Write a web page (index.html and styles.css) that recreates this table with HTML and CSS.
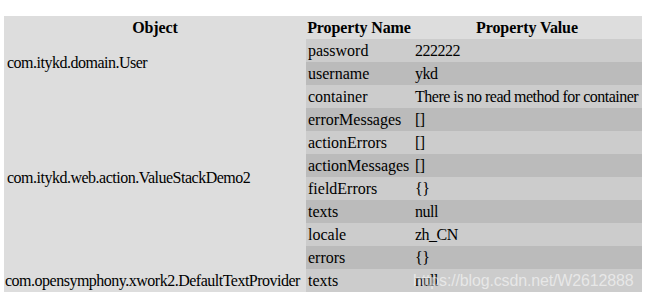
FILE: index.html
```html
<!DOCTYPE html>
<html>
<head>
<meta charset="utf-8">
<link rel="stylesheet" href="styles.css">
</head>
<body>
<div class="wrap">
<table class="debug">
  <colgroup>
    <col class="c-obj">
    <col class="c-name">
    <col class="c-val">
  </colgroup>
  <tr class="head">
    <th>Object</th>
    <th>Property Name</th>
    <th>Property Value</th>
  </tr>
  <tr class="odd">
    <td class="obj" rowspan="2">com.itykd.domain.User</td>
    <td class="name">password</td><td class="val">222222</td>
  </tr>
  <tr class="even"><td class="name">username</td><td class="val">ykd</td></tr>
  <tr class="odd">
    <td class="obj" rowspan="8">com.itykd.web.action.ValueStackDemo2</td>
    <td class="name">container</td><td class="val">There is no read method for container</td>
  </tr>
  <tr class="even"><td class="name">errorMessages</td><td class="val">[]</td></tr>
  <tr class="odd"><td class="name">actionErrors</td><td class="val">[]</td></tr>
  <tr class="even"><td class="name">actionMessages</td><td class="val">[]</td></tr>
  <tr class="odd"><td class="name">fieldErrors</td><td class="val">{}</td></tr>
  <tr class="even"><td class="name">texts</td><td class="val">null</td></tr>
  <tr class="odd"><td class="name">locale</td><td class="val">zh_CN</td></tr>
  <tr class="even"><td class="name">errors</td><td class="val">{}</td></tr>
  <tr class="odd">
    <td class="obj last">com.opensymphony.xwork2.DefaultTextProvider</td>
    <td class="name">texts</td><td class="val">null</td>
  </tr>
</table>
<span class="watermark">https://blog.csdn.net/W2612888</span>
</div>
</body>
</html>
```
FILE: styles.css
```css
html, body {
  margin: 0;
  padding: 0;
  background: #fff;
}
body {
  padding: 16px 0 0 4px;
  font-family: "Liberation Serif", "Times New Roman", serif;
  font-size: 16px;
  color: #000;
}
.wrap {
  position: relative;
  display: inline-block;
}
.debug {
  border-collapse: collapse;
  border-spacing: 0;
  table-layout: fixed;
  width: 638px;
}
.c-obj { width: 302px; }
.c-name { width: 106px; }
.c-val { width: 230px; }
.debug th,
.debug td {
  padding: 2px;
  line-height: 19px;
  height: 19px;
  white-space: nowrap;
  overflow: hidden;
  text-align: left;
  vertical-align: middle;
}
.debug th {
  text-align: center;
  font-weight: bold;
  padding: 2px 0;
  letter-spacing: -0.1px;
}
.head {
  background: #dddddd;
}
.odd td {
  background: #cccccc;
}
.even td {
  background: #bbbbbb;
}
.debug td.obj {
  background: #dddddd;
  padding-left: 3px;
  letter-spacing: -0.5px;
}
.debug td.obj.last {
  padding-left: 1px;
}
.debug td.name {
  padding-left: 2px;
}
.debug td.val {
  padding-left: 3px;
  padding-right: 0;
  letter-spacing: -0.5px;
}
.watermark {
  position: absolute;
  left: 409px;
  top: 256px;
  font-family: "Liberation Sans", Arial, sans-serif;
  font-size: 16px;
  letter-spacing: -0.15px;
  color: rgba(255, 255, 255, 0.55);
  white-space: nowrap;
}
```
